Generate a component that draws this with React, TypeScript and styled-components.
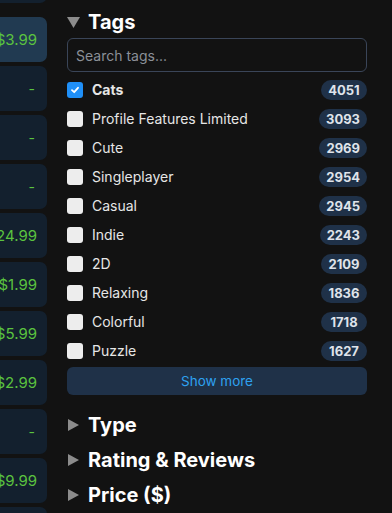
import React from "react";
import styled, { createGlobalStyle } from "styled-components";

const Global = createGlobalStyle`
  html, body { margin: 0; padding: 0; background: #121212; }
  body { font-family: Inter, "Noto Sans", sans-serif; color: #e8e8e8; overflow: hidden; }
`;

const Page = styled.div`
  display: flex;
  gap: 20px;
  width: 392px;
  height: 513px;
  overflow: hidden;
`;

const PriceColumn = styled.div`
  width: 47px;
  flex-shrink: 0;
  display: flex;
  flex-direction: column;
  gap: 4px;
  padding-top: 17px;
  position: relative;
`;

const Card = styled.div<{ $active?: boolean }>`
  height: 45px;
  flex-shrink: 0;
  margin-left: -40px;
  border-radius: 7px;
  background: ${(p) => (p.$active ? "#213a51" : "#13202e")};
  display: flex;
  align-items: center;
  justify-content: flex-end;
  padding-right: 10px;
  font-size: 15px;
  color: #5bc33f;
  white-space: nowrap;
`;

const TopCardStub = styled.div`
  position: absolute;
  top: -40px;
  left: -40px;
  right: 0;
  height: 43px;
  border-radius: 7px;
  background: #13202e;
`;

const Dash = styled.span`
  font-size: 14px;
  padding-right: 2px;
`;

const Panel = styled.div`
  width: 300px;
  flex-shrink: 0;
  display: flex;
  flex-direction: column;
  padding-top: 10px;
`;

const SectionHeader = styled.div`
  display: flex;
  align-items: center;
  gap: 8px;
  height: 24px;
  font-size: 20px;
  font-weight: 700;
  color: #ffffff;
`;

const CollapsedHeader = styled(SectionHeader)`
  height: 35px;
  font-size: 20px;
`;

const Marker = styled.svg`
  width: 13px;
  height: 12px;
  flex-shrink: 0;
  fill: #8c8c8c;
`;

const Search = styled.input`
  margin-top: 4px;
  height: 34px;
  box-sizing: border-box;
  width: 100%;
  border: 1px solid #3a4558;
  border-radius: 6px;
  background: transparent;
  padding: 0 8px;
  font-family: inherit;
  font-size: 14px;
  color: #e8e8e8;
  outline: none;
  &::placeholder { color: #8b9098; }
`;

const TagList = styled.div`
  margin-top: 3px;
  display: flex;
  flex-direction: column;
`;

const TagRow = styled.div`
  height: 29px;
  display: flex;
  align-items: center;
`;

const Box = styled.span<{ $checked?: boolean }>`
  width: 16px;
  height: 16px;
  border-radius: 3px;
  flex-shrink: 0;
  background: ${(p) => (p.$checked ? "#1f8ff7" : "#ededed")};
  display: flex;
  align-items: center;
  justify-content: center;
`;

const TagLabel = styled.span<{ $bold?: boolean }>`
  margin-left: 9px;
  flex: 1;
  font-size: 14px;
  font-weight: ${(p) => (p.$bold ? 700 : 400)};
  color: #e6e6e6;
`;

const Badge = styled.span`
  height: 20px;
  min-width: 46px;
  box-sizing: border-box;
  border-radius: 10px;
  background: #1f3148;
  color: #dfe3ea;
  font-size: 13px;
  font-weight: 700;
  display: flex;
  align-items: center;
  justify-content: center;
  padding: 0 7px;
`;

const ShowMore = styled.button`
  margin-top: 2px;
  height: 28px;
  width: 100%;
  border: none;
  border-radius: 6px;
  background: #1f3148;
  color: #2ea1f0;
  font-family: inherit;
  font-size: 13.5px;
`;

const Collapsed = styled.div`
  margin-top: 12px;
  display: flex;
  flex-direction: column;
`;

const prices: (string | null)[] = [
  "$3.99", null, null, null, "$24.99", "$1.99", "$5.99", "$2.99", null, "$9.99", "",
];

const tags: [string, number][] = [
  ["Cats", 4051],
  ["Profile Features Limited", 3093],
  ["Cute", 2969],
  ["Singleplayer", 2954],
  ["Casual", 2945],
  ["Indie", 2243],
  ["2D", 2109],
  ["Relaxing", 1836],
  ["Colorful", 1718],
  ["Puzzle", 1627],
];

const Down = () => (
  <Marker viewBox="0 0 13 12"><polygon points="0,1 13,1 6.5,12" /></Marker>
);
const Right = () => (
  <Marker viewBox="0 0 13 12"><polygon points="1,0 12,6 1,12" /></Marker>
);

export default function App() {
  return (
    <>
      <Global />
      <Page>
        <PriceColumn>
          <TopCardStub />
          {prices.map((p, i) => (
            <Card key={i} $active={i === 0}>
              {p === null ? <Dash>-</Dash> : p}
            </Card>
          ))}
        </PriceColumn>
        <Panel>
          <SectionHeader>
            <Down />
            Tags
          </SectionHeader>
          <Search placeholder="Search tags..." />
          <TagList>
            {tags.map(([name, count], i) => (
              <TagRow key={name}>
                <Box $checked={i === 0}>
                  {i === 0 && (
                    <svg width="10" height="10" viewBox="0 0 10 10">
                      <path d="M2 5.2 L4.2 7.2 L8 2.8" stroke="#fff" strokeWidth="1.8" fill="none" strokeLinecap="round" strokeLinejoin="round" />
                    </svg>
                  )}
                </Box>
                <TagLabel $bold={i === 0}>{name}</TagLabel>
                <Badge>{count}</Badge>
              </TagRow>
            ))}
          </TagList>
          <ShowMore>Show more</ShowMore>
          <Collapsed>
            <CollapsedHeader><Right />Type</CollapsedHeader>
            <CollapsedHeader><Right />Rating &amp; Reviews</CollapsedHeader>
            <CollapsedHeader><Right />Price ($)</CollapsedHeader>
          </Collapsed>
        </Panel>
      </Page>
    </>
  );
}
